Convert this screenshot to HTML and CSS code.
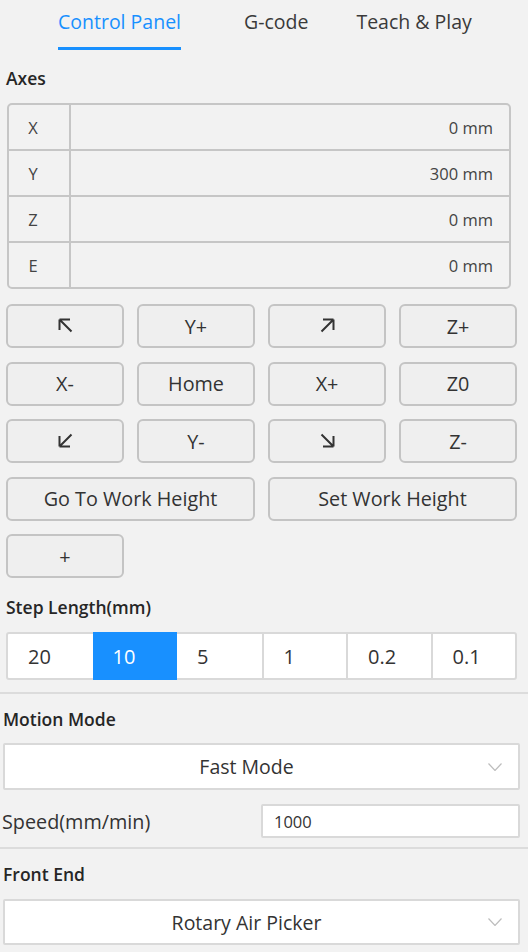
FILE: index.html
```html
<!DOCTYPE html>
<html lang="en">
<head>
<meta charset="utf-8">
<title>Control Panel</title>
<link rel="stylesheet" href="styles.css">
</head>
<body>
<div class="panel">
  <nav class="tabs">
    <div class="tab active">Control Panel</div>
    <div class="tab tab-gcode">G-code</div>
    <div class="tab tab-teach">Teach &amp; Play</div>
  </nav>

  <section class="sec sec-axes">
    <h3 class="label">Axes</h3>
    <div class="axes">
      <div class="axis-row"><div class="axis-name">X</div><div class="axis-val">0 mm</div></div>
      <div class="axis-row"><div class="axis-name">Y</div><div class="axis-val">300 mm</div></div>
      <div class="axis-row"><div class="axis-name">Z</div><div class="axis-val">0 mm</div></div>
      <div class="axis-row"><div class="axis-name">E</div><div class="axis-val">0 mm</div></div>
    </div>

    <div class="jog">
      <button class="btn"><svg class="arr" viewBox="0 0 15 15"><path d="M1.5 1.5H12M1.5 1.5V12M1.5 1.5L13.5 13.5"/></svg></button>
      <button class="btn">Y+</button>
      <button class="btn"><svg class="arr" viewBox="0 0 15 15"><path d="M13.5 1.5H3M13.5 1.5V12M13.5 1.5L1.5 13.5"/></svg></button>
      <button class="btn">Z+</button>
      <button class="btn">X-</button>
      <button class="btn">Home</button>
      <button class="btn">X+</button>
      <button class="btn">Z0</button>
      <button class="btn"><svg class="arr" viewBox="0 0 15 15"><path d="M1.5 13.5H12M1.5 13.5V3M1.5 13.5L13.5 1.5"/></svg></button>
      <button class="btn">Y-</button>
      <button class="btn"><svg class="arr" viewBox="0 0 15 15"><path d="M13.5 13.5H3M13.5 13.5V3M13.5 13.5L1.5 1.5"/></svg></button>
      <button class="btn">Z-</button>
      <button class="btn span2">Go To Work Height</button>
      <button class="btn span2">Set Work Height</button>
      <button class="btn">+</button>
    </div>

    <h3 class="label label-step">Step Length(mm)</h3>
    <div class="steps">
      <div class="step">20</div>
      <div class="step selected">10</div>
      <div class="step">5</div>
      <div class="step">1</div>
      <div class="step">0.2</div>
      <div class="step">0.1</div>
    </div>
  </section>

  <hr class="divider divider-1">

  <section class="sec sec-low">
    <h3 class="label">Motion Mode</h3>
    <div class="select">
      <span class="select-text">Fast Mode</span>
      <svg class="chev" viewBox="0 0 14 8"><path d="M0.5 0.5L7 7.5L13.5 0.5"/></svg>
    </div>
    <div class="speed-row">
      <span class="speed-label">Speed(mm/min)</span>
      <div class="input">1000</div>
    </div>
  </section>

  <hr class="divider divider-2">

  <section class="sec sec-low">
    <h3 class="label">Front End</h3>
    <div class="select select-front">
      <span class="select-text">Rotary Air Picker</span>
      <svg class="chev" viewBox="0 0 14 8"><path d="M0.5 0.5L7 7.5L13.5 0.5"/></svg>
    </div>
  </section>
</div>
</body>
</html>
```

FILE: styles.css
```css
* { box-sizing: border-box; }

html, body {
  margin: 0;
  padding: 0;
  background: #f2f2f2;
}

body {
  font-family: "Open Sans", "Noto Sans", sans-serif;
  color: #333;
}

.panel {
  width: 528px;
}

/* Tabs */
.tabs {
  display: flex;
  height: 50px;
  padding-left: 58px;
}

.tab {
  position: relative;
  height: 50px;
  line-height: 44px;
  font-size: 19.5px;
  color: #3a3a3a;
  white-space: nowrap;
}

.tab.active {
  color: #1890ff;
}

.tab.active::after {
  content: "";
  position: absolute;
  left: 0;
  right: 0;
  bottom: 0;
  height: 3px;
  background: #1890ff;
}

.tab-gcode { margin-left: 63px; }
.tab-teach { margin-left: 48px; }

/* Sections */
.sec-axes {
  padding: 0 11px 0 6px;
}

.sec-low {
  padding: 0 8px 0 3px;
}

.label {
  margin: 0;
  font-size: 17.5px;
  font-weight: 600;
  line-height: 22px;
  color: #262626;
}

.sec-axes > .label:first-child {
  margin-top: 17px;
}

/* Axes table */
.axes {
  margin: 14px 0 0 1px;
  width: 504px;
  border: 2px solid #c6c6c6;
  border-radius: 5px;
}

.axis-row {
  display: flex;
  height: 46px;
  border-top: 2px solid #c6c6c6;
}

.axis-row:first-child {
  height: 44px;
  border-top: 0;
}

.axis-name {
  width: 62px;
  border-right: 2px solid #c6c6c6;
  display: flex;
  align-items: center;
  justify-content: center;
  font-size: 16.5px;
  color: #444;
  padding-right: 12px;
}

.axis-val {
  flex: 1;
  display: flex;
  align-items: center;
  justify-content: flex-end;
  padding-right: 16px;
  font-size: 16.5px;
  color: #444;
}

/* Jog buttons */
.jog {
  margin-top: 15px;
  display: grid;
  grid-template-columns: repeat(4, 1fr);
  grid-auto-rows: 44px;
  column-gap: 13px;
  row-gap: 13.5px;
}

.btn {
  font-family: inherit;
  font-size: 19.8px;
  color: #333;
  background: #efefef;
  border: 2px solid #c4c4c4;
  border-radius: 6px;
  padding: 0;
  display: flex;
  align-items: center;
  justify-content: center;
}

.span2 {
  grid-column: span 2;
}

.arr {
  width: 15px;
  height: 15px;
  fill: none;
  stroke: #333;
  stroke-width: 2;
  margin-top: -2px;
}

/* Step length */
.label-step {
  margin-top: 18px;
}

.steps {
  margin-top: 14px;
  display: grid;
  grid-template-columns: repeat(6, 1fr);
  height: 48px;
  border: 2px solid #d9d9d9;
  border-radius: 3px;
  background: #fff;
}

.step {
  display: flex;
  align-items: center;
  padding-left: 20px;
  font-size: 20px;
  color: #333;
  border-left: 2px solid #d9d9d9;
}

.step:first-child {
  border-left: 0;
}

.step.selected {
  background: #1890ff;
  color: #fff;
  border-left: 0;
  margin: -2px 0;
}

.step.selected + .step {
  border-left: 0;
}

/* Dividers */
.divider {
  margin: 0;
  border: 0;
  height: 2px;
  background: #dcdcdc;
}

.divider-1 { margin-top: 12px; }
.divider-2 { margin-top: 9px; }

.sec-low > .label:first-child {
  margin-top: 14px;
}

/* Select */
.select {
  margin-top: 13px;
  height: 47px;
  border: 2px solid #d9d9d9;
  border-radius: 2px;
  background: #fff;
  display: flex;
  align-items: center;
  padding: 0 16px 0 0;
}

.select-front {
  margin-top: 14px;
  height: 46px;
}

.select-text {
  flex: 1;
  text-align: center;
  font-size: 19.5px;
  color: #333;
  padding-left: 16px;
  padding-right: 16px;
}

.chev {
  width: 14px;
  height: 8px;
  fill: none;
  stroke: #bdbdbd;
  stroke-width: 1.2;
}

/* Speed */
.speed-row {
  margin-top: 14px;
  display: flex;
  align-items: center;
  justify-content: space-between;
}

.speed-label {
  font-size: 19.8px;
  color: #333;
  margin-left: -1px;
}

.input {
  width: 259px;
  height: 34px;
  border: 2px solid #d9d9d9;
  border-radius: 2px;
  background: #fff;
  display: flex;
  align-items: center;
  padding-left: 11px;
  font-size: 16.5px;
  color: #333;
}
```
